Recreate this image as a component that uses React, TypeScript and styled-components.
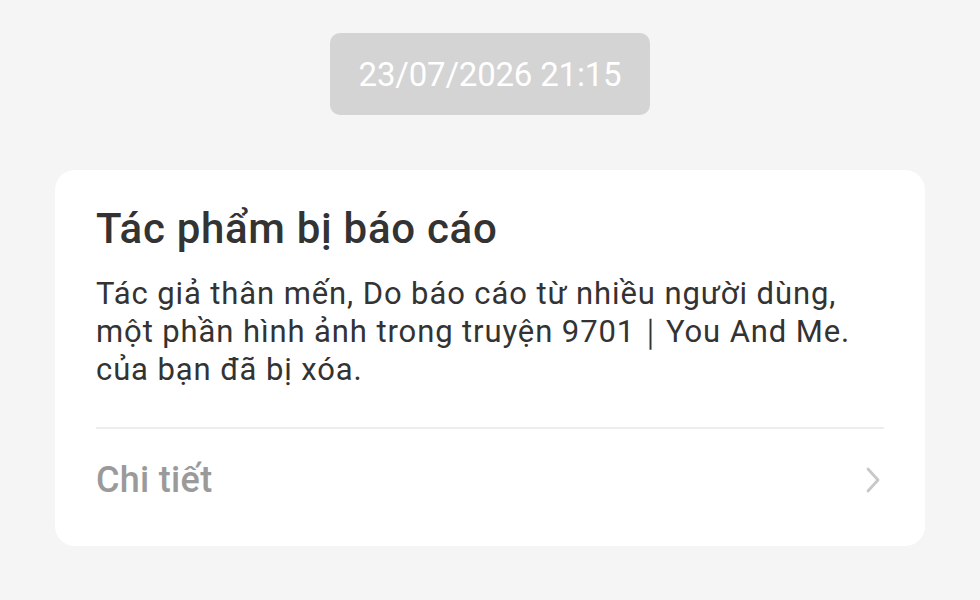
import React from "react";
import styled, { createGlobalStyle } from "styled-components";

const GlobalStyle = createGlobalStyle`
  html, body {
    margin: 0;
    padding: 0;
    background: #f5f5f5;
    font-family: Roboto, "Noto Sans", Arial, sans-serif;
  }
`;

const Page = styled.div`
  width: 980px;
  height: 600px;
  box-sizing: border-box;
  padding: 33px 55px 0;
  display: flex;
  flex-direction: column;
  align-items: center;
  background: #f5f5f5;
`;

const TimeStamp = styled.div`
  width: 320px;
  height: 82px;
  border-radius: 10px;
  background: #d4d4d4;
  color: #ffffff;
  font-size: 33px;
  letter-spacing: -0.2px;
  display: flex;
  align-items: center;
  justify-content: center;
`;

const Card = styled.div`
  margin-top: 55px;
  width: 870px;
  height: 376px;
  box-sizing: border-box;
  background: #ffffff;
  border-radius: 20px;
  padding: 34px 41px 0;
  display: flex;
  flex-direction: column;
`;

const Title = styled.h2`
  margin: 0;
  font-size: 42px;
  font-weight: 500;
  color: #333333;
  line-height: 50px;
  letter-spacing: 0.7px;
`;

const Body = styled.p`
  margin: 21px 0 0;
  font-size: 31px;
  line-height: 38px;
  color: #333333;
  letter-spacing: 0.9px;
`;

const Divider = styled.hr`
  margin: 38px 0 0;
  border: none;
  height: 2px;
  background: #ededed;
`;

const DetailRow = styled.div`
  display: flex;
  align-items: center;
  justify-content: space-between;
  height: 102px;
`;

const DetailLabel = styled.span`
  font-size: 36px;
  font-weight: 500;
  color: #9a9a9a;
  letter-spacing: 0.3px;
`;

const Chevron = styled.svg`
  width: 18px;
  height: 30px;
  margin-right: 2px;
`;

export default function App() {
  return (
    <>
      <GlobalStyle />
      <Page>
        <TimeStamp>23/07/2026 21:15</TimeStamp>
        <Card>
          <Title>Tác phẩm bị báo cáo</Title>
          <Body>
            Tác giả thân mến, Do báo cáo từ nhiều người dùng,
            <br />
            một phần hình ảnh trong truyện 9701｜You And Me.
            <br />
            của bạn đã bị xóa.
          </Body>
          <Divider />
          <DetailRow>
            <DetailLabel>Chi tiết</DetailLabel>
            <Chevron viewBox="0 0 18 30">
              <path d="M4 4 L14 15 L4 26" fill="none" stroke="#c8c8c8" strokeWidth="2.8" strokeLinecap="round" strokeLinejoin="round" />
            </Chevron>
          </DetailRow>
        </Card>
      </Page>
    </>
  );
}
